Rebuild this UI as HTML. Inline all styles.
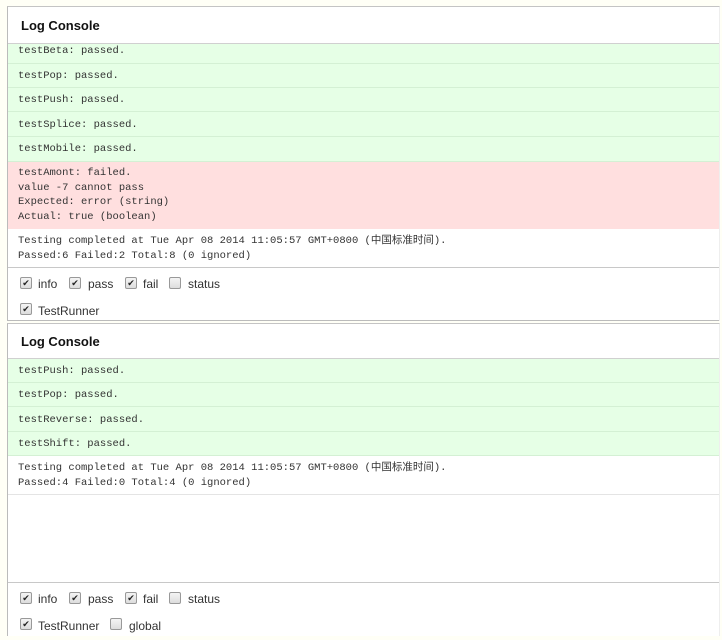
<!DOCTYPE html>
<html><head><style>
body{margin:0;width:722px;height:640px;background:#fffff6;position:relative;overflow:hidden;font-family:"Liberation Sans",sans-serif}
.p{position:absolute;left:7px;width:711px;background:#fff;border-left:1px solid #bbb;border-top:1px solid #c4c4c4;border-right:1px solid #eee}
.a{position:absolute}
.h{font-weight:bold;font-size:13px;left:13px;color:#111}
.g{position:absolute;left:0;right:0;background:#e6ffe6;border-bottom:1px solid #d4f0d4}
.r{position:absolute;left:0;right:0;background:#ffdfdf}
.m{font-family:"Liberation Mono","Noto Sans CJK SC",monospace;font-size:10.5px;color:#333;line-height:14.5px;left:10px;white-space:pre}
.line{position:absolute;left:0;right:0;height:1px;background:#c8c8c8}
.cb{position:absolute;width:10px;height:10px;border:1px solid #999;border-radius:2px;background:linear-gradient(#f4f4f4,#ddd);font-size:9px;line-height:10px;text-align:center;color:#222}
.l{position:absolute;font-size:12px;color:#333}
</style></head><body>
<div class="p" style="top:6px;height:314px">
 <div class="a h" style="top:11px">Log Console</div>
 <div class="line" style="top:36px;background:#d0d0d0"></div>
 <div class="g" style="top:37px;height:19px"></div>
 <div class="g" style="top:57px;height:23px"></div>
 <div class="g" style="top:81px;height:23px"></div>
 <div class="g" style="top:105px;height:24px"></div>
 <div class="g" style="top:130px;height:24px"></div>
 <div class="r" style="top:155px;height:67px"></div>
 <div class="a m" style="top:37px">testBeta: passed.</div>
 <div class="a m" style="top:62px">testPop: passed.</div>
 <div class="a m" style="top:86px">testPush: passed.</div>
 <div class="a m" style="top:111px">testSplice: passed.</div>
 <div class="a m" style="top:135px">testMobile: passed.</div>
 <div class="a m" style="top:159px">testAmont: failed.
value -7 cannot pass
Expected: error (string)
Actual: true (boolean)</div>
 <div class="a m" style="top:227px">Testing completed at Tue Apr 08 2014 11:05:57 GMT+0800 (中国标准时间).
Passed:6 Failed:2 Total:8 (0 ignored)</div>
 <div class="line" style="top:260px"></div>
 <div class="cb" style="left:12px;top:270px">✔</div><div class="l" style="left:30px;top:270px">info</div>
 <div class="cb" style="left:61px;top:270px">✔</div><div class="l" style="left:80px;top:270px">pass</div>
 <div class="cb" style="left:117px;top:270px">✔</div><div class="l" style="left:135px;top:270px">fail</div>
 <div class="cb" style="left:161px;top:270px"></div><div class="l" style="left:180px;top:270px">status</div>
 <div class="cb" style="left:12px;top:296px">✔</div><div class="l" style="left:30px;top:297px">TestRunner</div>
</div>
<div class="line" style="top:320px;left:7px;width:712px;background:#bbb"></div>
<div class="p" style="top:323px;height:312px">
 <div class="a h" style="top:10px">Log Console</div>
 <div class="line" style="top:34px;background:#d0d0d0"></div>
 <div class="g" style="top:35px;height:23px"></div>
 <div class="g" style="top:59px;height:23px"></div>
 <div class="g" style="top:83px;height:24px"></div>
 <div class="g" style="top:108px;height:23px"></div>
 <div class="a m" style="top:40px">testPush: passed.</div>
 <div class="a m" style="top:64px">testPop: passed.</div>
 <div class="a m" style="top:89px">testReverse: passed.</div>
 <div class="a m" style="top:113px">testShift: passed.</div>
 <div class="a m" style="top:137px">Testing completed at Tue Apr 08 2014 11:05:57 GMT+0800 (中国标准时间).
Passed:4 Failed:0 Total:4 (0 ignored)</div>
 <div class="line" style="top:170px;background:#e4e4e4"></div>
 <div class="line" style="top:258px"></div>
 <div class="cb" style="left:12px;top:268px">✔</div><div class="l" style="left:30px;top:268px">info</div>
 <div class="cb" style="left:61px;top:268px">✔</div><div class="l" style="left:80px;top:268px">pass</div>
 <div class="cb" style="left:117px;top:268px">✔</div><div class="l" style="left:135px;top:268px">fail</div>
 <div class="cb" style="left:161px;top:268px"></div><div class="l" style="left:180px;top:268px">status</div>
 <div class="cb" style="left:12px;top:294px">✔</div><div class="l" style="left:30px;top:295px">TestRunner</div>
 <div class="cb" style="left:102px;top:294px"></div><div class="l" style="left:121px;top:295px">global</div>
</div>
</body></html>
